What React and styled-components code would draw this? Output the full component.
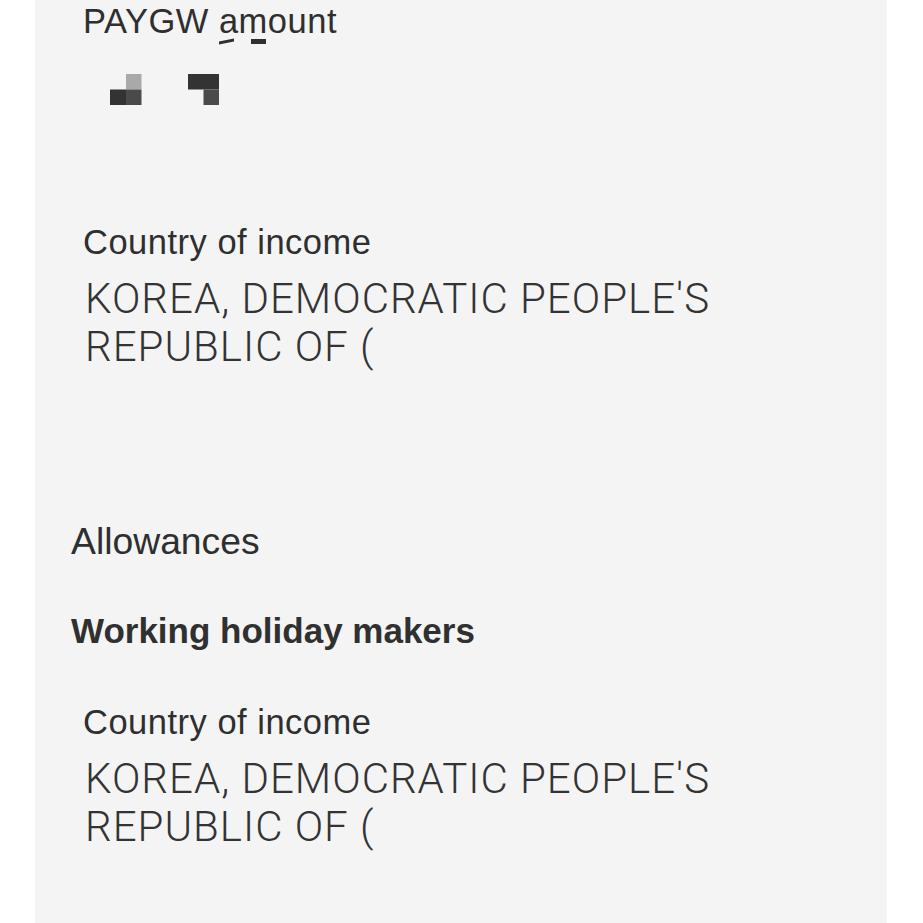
import React from 'react';
import styled, { createGlobalStyle } from 'styled-components';

const GlobalStyle = createGlobalStyle`
  html, body {
    margin: 0;
    padding: 0;
    background: #ffffff;
  }
  body {
    font-family: "Liberation Sans", Arial, sans-serif;
    color: #2f2f2f;
  }
`;

const Panel = styled.div`
  margin-left: 35px;
  width: 852px;
  min-height: 923px;
  box-sizing: border-box;
  background: #f4f4f4;
  padding: 1px 0 0 36px;
`;

const Field = styled.div`
  padding-left: 12px;
  margin-top: ${p => p.$gap || 0}px;
`;

const Label = styled.div`
  font-size: 34.5px;
  line-height: 40px;
  letter-spacing: 0.5px;
  color: #2f2f2f;
`;

const Value = styled.div`
  margin-top: 13px;
  padding-left: 2px;
  max-width: 740px;
  font-family: Roboto, "Liberation Sans", sans-serif;
  font-weight: 300;
  font-size: 42px;
  line-height: 48px;
  letter-spacing: 1px;
  color: #333333;
`;

const Heading = styled.div`
  margin-top: ${p => p.$gap}px;
  font-size: 37.3px;
  line-height: 44px;
  color: #2f2f2f;
`;

const SubHeading = styled.div`
  margin-top: ${p => p.$gap}px;
  font-size: 35px;
  line-height: 40px;
  font-weight: 700;
  color: #303030;
`;

const Scribble = styled.span`
  position: relative;
  &::after {
    content: '';
    position: absolute;
    left: ${p => (p.$thin ? 0 : 12)}px;
    width: 15px;
    height: ${p => (p.$thin ? 3 : 5)}px;
    bottom: ${p => (p.$thin ? -3 : -4)}px;
    background: #2f2f2f;
    transform: ${p => (p.$thin ? 'skewY(-12deg)' : 'none')};
  }
`;

const Redacted = styled.svg`
  display: block;
  margin: 33px 0 0 27px;
`;

function Pixels() {
  return (
    <Redacted width="110" height="31" viewBox="0 0 110 31">
      <rect x="16" y="0" width="15.5" height="15.5" fill="#a9a9a9" />
      <rect x="0" y="15.5" width="16" height="15.5" fill="#333333" />
      <rect x="16" y="15.5" width="15.5" height="15.5" fill="#4a4a4a" />
      <rect x="78" y="0" width="31" height="15.5" fill="#333333" />
      <rect x="93.5" y="15.5" width="15.5" height="15.5" fill="#4a4a4a" />
    </Redacted>
  );
}

export default function App() {
  return (
    <>
      <GlobalStyle />
      <Panel>
        <Field>
          <Label>
            PAYGW <Scribble $thin>a</Scribble><Scribble>m</Scribble>ount
          </Label>
          <Pixels />
        </Field>

        <Field $gap={117}>
          <Label>Country of income</Label>
          <Value>KOREA, DEMOCRATIC PEOPLE'S REPUBLIC OF (</Value>
        </Field>

        <Heading $gap={148}>Allowances</Heading>

        <SubHeading $gap={48}>Working holiday makers</SubHeading>

        <Field $gap={51}>
          <Label>Country of income</Label>
          <Value>KOREA, DEMOCRATIC PEOPLE'S REPUBLIC OF (</Value>
        </Field>
      </Panel>
    </>
  );
}
